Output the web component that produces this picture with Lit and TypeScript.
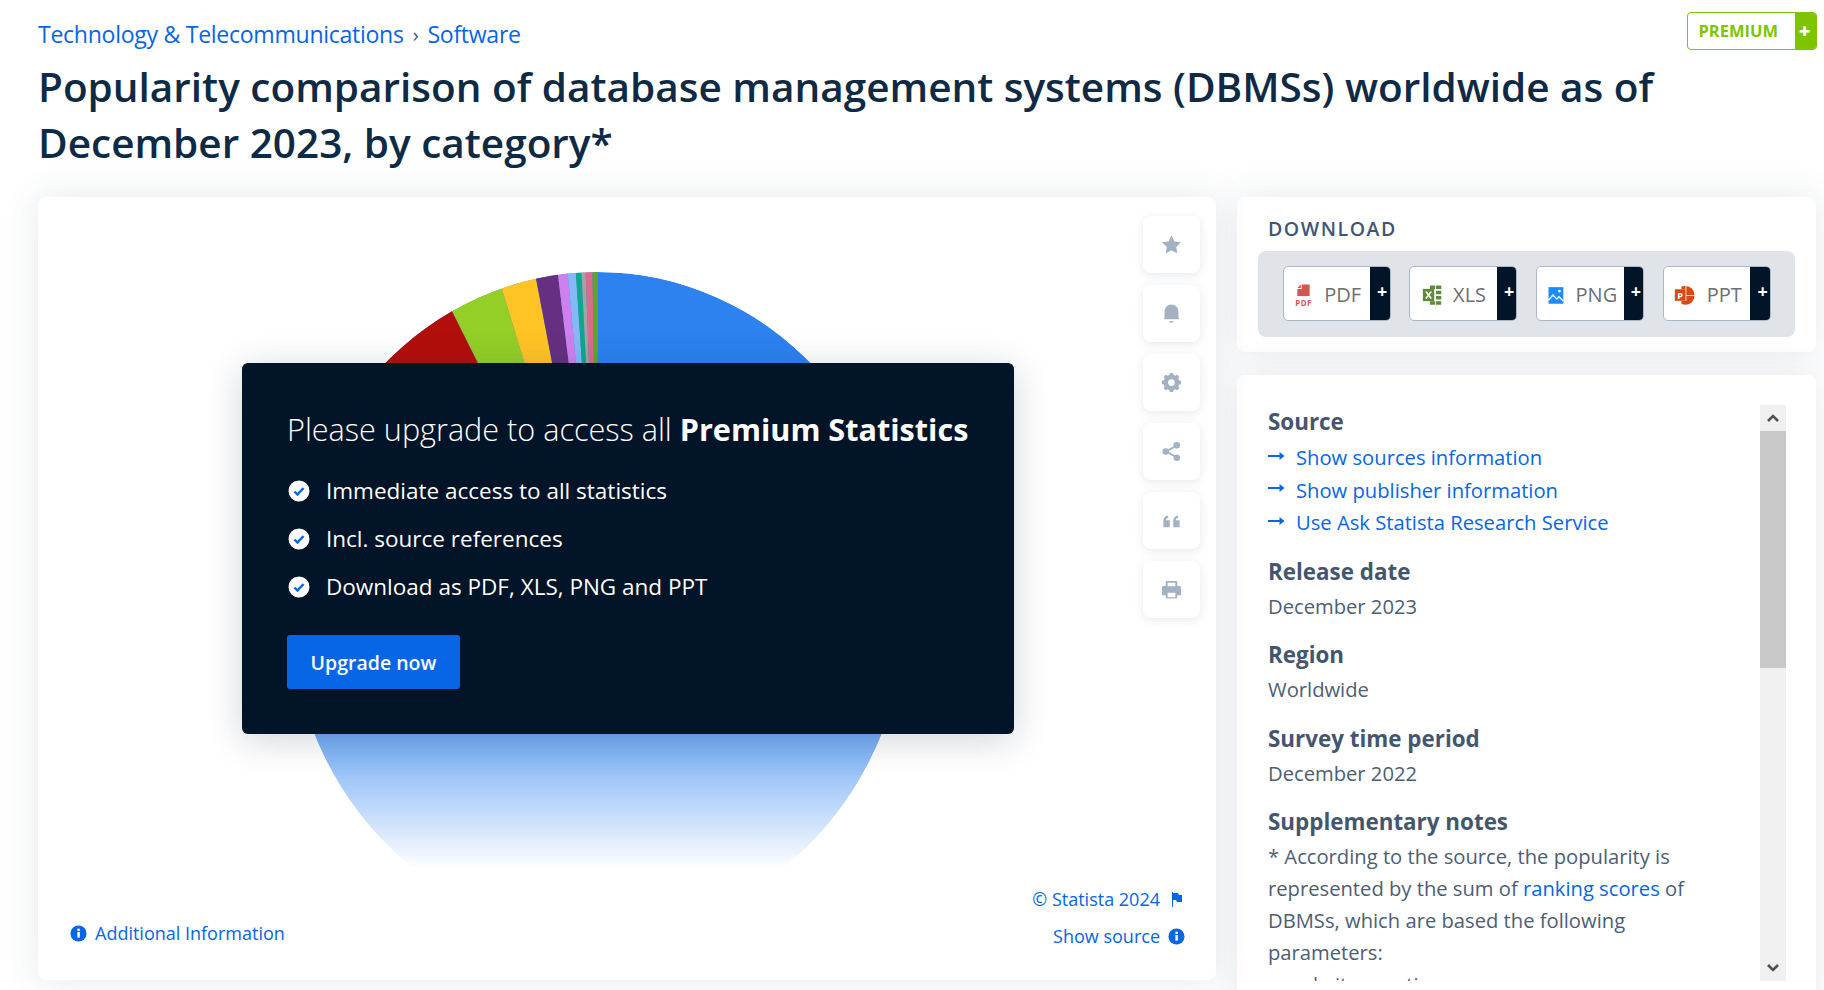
import { LitElement, html, css, svg } from "lit";
import { customElement } from "lit/decorators.js";

const CX = 560, CY = 406, RX = 309, RY = 331;
// slices: colour, start/end as dx/dy slope measured up-left from the top of the pie
const wedges: [string, number, number][] = [
  ["#b20e0c", 0.5, 99],
  ["#93cf26", 0.306, 0.5],
  ["#ffc324", 0.191, 0.306],
  ["#662f80", 0.122, 0.191],
  ["#d080ee", 0.092, 0.122],
  ["#86b8f5", 0.067, 0.092],
  ["#0ba88a", 0.05, 0.067],
  ["#a3a3a3", 0.0375, 0.05],
  ["#d96b8b", 0.0167, 0.0375],
  ["#5ea52a", 0, 0.0167],
];
const pt = (s: number) => `${CX - s * 400},${CY - 400}`;
const wedgePath = (a: number, b: number) =>
  b > 50 ? `M${CX},${CY}L${pt(a)}L${CX - 500},${CY - 400}L${CX - 500},${CY}Z` : `M${CX},${CY}L${pt(a)}L${pt(b)}Z`;

const check = html`<svg class="check" viewBox="0 0 22 22"><circle cx="11" cy="11" r="10.5" fill="#fff"/><path d="M6.5 11.5l3 3 6-6.5" fill="none" stroke="#0666e5" stroke-width="2.4"/></svg>`;
const info = html`<svg class="info" viewBox="0 0 18 18"><circle cx="9" cy="9" r="8.5" fill="#0666e5"/><rect x="7.8" y="7.4" width="2.6" height="6" fill="#fff"/><rect x="7.8" y="3.9" width="2.6" height="2.4" fill="#fff"/></svg>`;
const arrow = html`<svg class="arrow" viewBox="0 0 17 10"><path d="M0 4h12V1l5 4-5 4V6H0z" fill="#0666e5"/></svg>`;

const gearTeeth = [0, 45, 90, 135].map(
  (a) => svg`<rect x="10" y="2" width="4" height="20" rx="1" transform="rotate(${a} 12 12)"/>`
);
const tools = [
  svg`<path d="M12 2.5l3 6.3 6.9.9-5 4.8 1.2 6.9-6.1-3.3-6.1 3.3 1.2-6.9-5-4.8 6.9-.9z"/>`,
  svg`<path d="M4 18c0-1 .8-1.400.8-3V10c0-4.500 3-7.500 7.200-7.500s7.200 3 7.200 7.500v5c0 1.600.8 2 .8 3z"/><rect x="10" y="20" width="4" height="1.500"/>`,
  svg`${gearTeeth}<circle cx="12" cy="12" r="6.200" fill="none" stroke="#a3b1c2" stroke-width="4"/><circle cx="12" cy="12" r="3.500" fill="#fff"/>`,
  svg`<path d="M17.500 6L6 12l11.500 6" fill="none" stroke="#a3b1c2" stroke-width="2"/><circle cx="17.500" cy="5.500" r="3.400"/><circle cx="6" cy="12" r="3.400"/><circle cx="17.500" cy="18.500" r="3.400"/>`,
  svg`<path d="M3.500 19v-6.500c0-3.500 2-5.500 5-5.500v2.300c-1.300 0-2.200.9-2.200 2.400h3.900V19zM13.800 19v-6.500c0-3.500 2-5.500 5-5.500v2.300c-1.300 0-2.200.9-2.200 2.400h3.900V19z"/>`,
  svg`<path fill-rule="evenodd" d="M6 3h12v5h1.500A2.500 2.500 0 0 1 22 10.500V18h-4v3.500H6V18H2v-7.500A2.500 2.500 0 0 1 4.500 8H6zM8 5v3.500h8V5zM8 15.500V20h8v-4.500z"/>`,
];

const fileIcons = [
  html`<svg class="ficon" viewBox="0 0 24 26"><path d="M10 1h9v13H5V6h5z" fill="#d2574c"/><path d="M5 5l4-4v4z" fill="#d2574c"/><text x="12" y="25" text-anchor="middle" class="pdft">PDF</text></svg>`,
  html`<svg class="ficon" viewBox="0 0 24 26"><path d="M9 2h6v4H9zM16 2h6v4h-6zM16 8h6v4h-6zM16 14h6v4h-6zM16 20h6v4h-6zM9 20h6v4H9z" fill="#5f8a3a"/><rect x="1" y="6" width="13" height="14" fill="#5f8a3a"/><path d="M4.500 9l6 8M10.500 9l-6 8" stroke="#fff" stroke-width="1.800"/></svg>`,
  html`<svg class="ficon" viewBox="0 0 24 26"><rect x="4" y="4" width="17" height="19" fill="#1a8cff"/><path d="M4 19l5-6 4.500 4.500 2.500-2.500 5 5" fill="none" stroke="#fff" stroke-width="1.600"/><circle cx="16.500" cy="8.500" r="1.600" fill="#fff"/></svg>`,
  html`<svg class="ficon wide" viewBox="0 0 28 26"><path d="M14 2a11 11 0 0 1 11 11H15V2z" fill="#d84a14"/><path d="M15 14h10a11 11 0 0 1-11 11 10 10 0 0 1-5-1.300V20h6z" fill="#d84a14"/><path d="M9 2.500A11 11 0 0 1 14 2v4H9z" fill="#d84a14"/><rect x="1" y="6" width="13" height="14" fill="#d84a14"/><text x="7.500" y="17.500" text-anchor="middle" class="pptt">P</text></svg>`,
];
const files = ["PDF", "XLS", "PNG", "PPT"];

@customElement("app-root")
export class AppRoot extends LitElement {
  static styles = css`
    :host { display: block; width: 1824px; height: 990px; overflow: hidden; background: #fff; font-family: "Open Sans", "Liberation Sans", sans-serif; color: #44566f; }
    a { color: #0666e5; text-decoration: none; }
    .page { padding: 12px 7px 0 38px; }
    .top { display: flex; justify-content: space-between; align-items: flex-start; height: 38px; }
    .crumbs { font-size: 23.100px; line-height: 45px; letter-spacing: -0.3px; display: flex; gap: 9px; }
    .sep { color: #44566f; font-size: 20px; }
    .premium { display: flex; width: 130px; height: 38px; box-sizing: border-box; border: 1.5px solid #7ec400; border-radius: 4px; overflow: hidden; color: #7ec400; font-weight: 700; font-size: 16.500px; align-items: center; justify-content: space-between; padding-left: 10.500px; line-height: 32px; }
    .premium b { align-self: stretch; width: 21px; background: #7ec400; color: #fff; display: flex; align-items: center; justify-content: center; font-size: 20px; padding-right: 2px; box-sizing: border-box; }
    h1 { margin: 9px 0 26px; font-size: 40.500px; line-height: 56px; font-weight: 600; color: #0f2a45; width: 1680px; }
    .main { display: flex; gap: 21px; align-items: flex-start; }
    .card { background: #fff; border-radius: 8px; box-shadow: 0 0 36px rgba(52, 76, 112, 0.13); }
    .chart-card { position: relative; width: 1178px; height: 783px; box-sizing: border-box; display: flex; flex-direction: column; }
    .upper { display: flex; height: 680px; }
    .pie { display: block; width: 1105px; height: 680px; flex: none; }
    .tools { display: flex; flex-direction: column; gap: 12px; padding-top: 19px; }
    .tool { width: 57px; height: 57px; border-radius: 8px; background: #fff; box-shadow: 0 2px 10px rgba(52, 76, 112, 0.13); display: flex; align-items: center; justify-content: center; }
    .tool svg { width: 23px; height: 23px; fill: #a3b1c2; margin-left: -1px; }
    .footer { flex: 1; display: flex; justify-content: space-between; padding: 0 31px 31px 32px; font-size: 18px; align-items: flex-end; }
    .footer .l { display: flex; align-items: center; gap: 8px; height: 26px; margin-bottom: 3px; }
    .footer .r { display: flex; flex-direction: column; align-items: flex-end; gap: 11px; }
    .footer .r a { display: flex; align-items: center; gap: 8px; height: 26px; }
    .info { width: 17px; height: 17px; flex: none; }
    .flag { width: 17px; height: 17px; }
    .overlay { position: absolute; left: 204px; top: 166px; width: 772px; height: 371px; box-sizing: border-box; padding: 41px 45px; background: #011428; border-radius: 6px; color: #fff; box-shadow: 0 6px 36px rgba(20, 40, 70, 0.2); }
    .head { font-size: 30.600px; line-height: 50px; font-weight: 300; white-space: nowrap; }
    .head b { font-weight: 700; }
    .overlay ul { list-style: none; margin: 12px 0 25px; padding: 0 0 0 1px; }
    .overlay li { height: 48px; display: flex; align-items: center; gap: 16px; font-size: 22.500px; }
    .check { width: 22px; height: 22px; flex: none; margin-top: 1px; }
    .btn { width: 173px; height: 54px; background: #0666e5; border-radius: 3px; color: #fff; font-size: 19.500px; font-weight: 600; display: flex; align-items: center; justify-content: center; }
    .side { width: 579px; display: flex; flex-direction: column; gap: 23px; }
    .dl { height: 155px; box-sizing: border-box; padding: 19px 21px 15px; }
    .dl h2 { margin: 0 0 9px 10px; font-size: 19.500px; line-height: 26px; font-weight: 600; letter-spacing: 1.550px; color: #3f5675; }
    .tray { height: 86px; box-sizing: border-box; background: #e0e3e7; border-radius: 8px; padding: 15px 24px 16px 24.500px; display: flex; justify-content: space-between; }
    .file { width: 108px; height: 55px; box-sizing: border-box; border: 1px solid #a9b7c9; border-radius: 5px; background: #fff; overflow: hidden; display: flex; align-items: center; color: #6c6f73; font-size: 20px; }
    .file .body { flex: 1; display: flex; align-items: center; justify-content: center; gap: 10px; padding: 2px 0 0 1px; }
    .file b { width: 19.500px; align-self: stretch; background: #011428; color: #fff; font-weight: 700; font-size: 18px; display: flex; align-items: center; justify-content: center; padding: 0 0 5px 5px; box-sizing: border-box; }
    .ficon { width: 21px; height: 24px; flex: none; }
    .ficon.wide { width: 23px; }
    .pdft { font: 700 9px "Open Sans", sans-serif; fill: #d2574c; letter-spacing: 0.5px; }
    .pptt { font: 700 11px "Open Sans", sans-serif; fill: #fff; }
    .details { height: 636px; box-sizing: border-box; padding: 30px 30px 30px 31px; display: flex; justify-content: space-between; }
    .scroll { width: 450px; height: 576px; overflow: hidden; }
    .scroll h3 { margin: 14.500px 0 0; font-size: 22.400px; line-height: 36px; font-weight: 700; color: #44566f; }
    .scroll h3:first-child { margin-top: -1.500px; }
    .val { font-size: 20.200px; line-height: 34px; color: #4d5e74; margin-top: -1px; }
    .links { display: flex; flex-direction: column; font-size: 20.200px; line-height: 32.500px; margin: 1.500px 0 0; }
    .links + h3 { margin-top: 15px; }
    .links a { display: flex; align-items: center; gap: 11px; }
    .arrow { width: 18px; height: 10px; flex: none; margin-top: -3px; margin-left: -1px; }
    .notes { font-size: 20.200px; line-height: 32px; color: #4d5e74; white-space: nowrap; }
    .notes ul { margin: 0; padding-left: 18px; list-style: disc; }
    .bar { width: 26px; height: 576px; background: #f0f0f0; display: flex; flex-direction: column; }
    .bar .btnb { height: 26px; display: flex; align-items: center; justify-content: center; flex: none; }
    .bar .btnb svg { width: 14px; height: 10px; }
    .bar .thumb { height: 237px; background: #c8c8c8; flex: none; }
    .bar .rest { flex: 1; }
  `;

  render() {
    return html`<div class="page">
      <div class="top">
        <div class="crumbs"><a>Technology &amp; Telecommunications</a><span class="sep">›</span><a>Software</a></div>
        <div class="premium">PREMIUM<b>+</b></div>
      </div>
      <h1>Popularity comparison of database management systems (DBMSs) worldwide as of<br />December 2023, by category*</h1>
      <div class="main">
        <div class="card chart-card">
          <div class="upper">
            <svg class="pie" viewBox="0 0 1105 680">
              <defs>
                <clipPath id="c"><ellipse cx=${CX} cy=${CY} rx=${RX} ry=${RY} /></clipPath>
                <linearGradient id="f" x1="0" y1="0" x2="0" y2="1">
                  <stop offset="0" stop-color="#fff" stop-opacity="0" />
                  <stop offset="1" stop-color="#fff" />
                </linearGradient>
              </defs>
              <g clip-path="url(#c)">
                <ellipse cx=${CX} cy=${CY} rx=${RX} ry=${RY} fill="#2d82f0" />
                ${wedges.map(([c, a, b]) => svg`<path d=${wedgePath(a, b)} fill=${c} />`)}
              </g>
              <rect x="0" y="472" width="1105" height="200" fill="url(#f)" />
              <rect x="0" y="672" width="1105" height="8" fill="#fff" />
            </svg>
            <div class="tools">
              ${tools.map((t) => html`<div class="tool"><svg viewBox="0 0 24 24">${t}</svg></div>`)}
            </div>
          </div>
          <div class="footer">
            <a class="l">${info}Additional Information</a>
            <div class="r">
              <a>© Statista 2024 <svg class="flag" viewBox="0 0 17 17"><path d="M4 1h1v15H4z" fill="#0666e5"/><path d="M5 2h5l1 2h3v7H9l-1-2H5z" fill="#0666e5"/></svg></a>
              <a>Show source ${info}</a>
            </div>
          </div>
          <div class="overlay">
            <div class="head">Please upgrade to access all <b>Premium Statistics</b></div>
            <ul>
              <li>${check}Immediate access to all statistics</li>
              <li>${check}Incl. source references</li>
              <li>${check}Download as PDF, XLS, PNG and PPT</li>
            </ul>
            <div class="btn">Upgrade now</div>
          </div>
        </div>
        <div class="side">
          <div class="card dl">
            <h2>DOWNLOAD</h2>
            <div class="tray">
              ${files.map((f, i) => html`<div class="file"><span class="body">${fileIcons[i]}${f}</span><b>+</b></div>`)}
            </div>
          </div>
          <div class="card details">
            <div class="scroll">
              <h3>Source</h3>
              <div class="links">
                <a>${arrow}Show sources information</a>
                <a>${arrow}Show publisher information</a>
                <a>${arrow}Use Ask Statista Research Service</a>
              </div>
              <h3>Release date</h3>
              <div class="val">December 2023</div>
              <h3>Region</h3>
              <div class="val">Worldwide</div>
              <h3>Survey time period</h3>
              <div class="val">December 2022</div>
              <h3>Supplementary notes</h3>
              <div class="notes">
                * According to the source, the popularity is<br />
                represented by the sum of <a>ranking scores</a> of<br />
                DBMSs, which are based the following<br />
                parameters:
                <ul><li>website mentions</li></ul>
              </div>
            </div>
            <div class="bar">
              <div class="btnb"><svg viewBox="0 0 14 10"><path d="M2 8l5-5 5 5" fill="none" stroke="#505050" stroke-width="2.600"/></svg></div>
              <div class="thumb"></div>
              <div class="rest"></div>
              <div class="btnb"><svg viewBox="0 0 14 10"><path d="M2 2l5 5 5-5" fill="none" stroke="#505050" stroke-width="2.600"/></svg></div>
            </div>
          </div>
        </div>
      </div>
    </div>`;
  }
}
